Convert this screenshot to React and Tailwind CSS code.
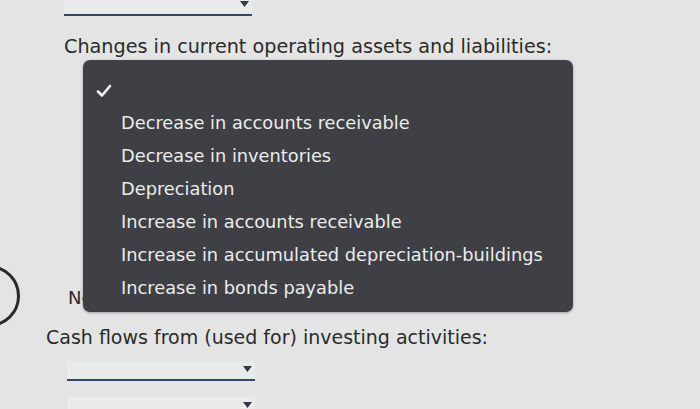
import React from "react";

// Dropdown field with blue underline and small caret
const Field = ({ className = "" }) => (
  <div className={`relative w-[188px] h-[20px] border-b-2 border-[#2f4a66] bg-[#e9ebeb] ${className}`}>
    <svg className="absolute right-[3px] top-[5px]" width="9" height="6" viewBox="0 0 9 6">
      <path d="M0 0 L9 0 L4.5 6 Z" fill="#2f3a46" />
    </svg>
  </div>
);

const options = [
  "Decrease in accounts receivable",
  "Decrease in inventories",
  "Depreciation",
  "Increase in accounts receivable",
  "Increase in accumulated depreciation-buildings",
  "Increase in bonds payable",
];

export default function App() {
  return (
    <div
      className="relative w-[700px] h-[409px] overflow-hidden bg-[#e3e4e3] text-[#2a2b2d]"
      style={{ fontFamily: "'DejaVu Sans', Verdana, sans-serif" }}
    >
      {/* left edge ring */}
      <div className="absolute left-[-42px] top-[265px] w-[62px] h-[62px] rounded-full border-[3px] border-[#2a2a2a]" />

      <div className="flex flex-col">
        <Field className="ml-[64px] mt-[-4px]" />
        <div className="ml-[64px] mt-[19px] text-[19.2px] leading-[24px]">
          Changes in current operating assets and liabilities:
        </div>
        <div className="ml-[68px] mt-[227px] text-[18px] leading-[24px]">Net</div>
        <div className="ml-[46px] mt-[15px] text-[19px] leading-[24px]">
          Cash flows from (used for) investing activities:
        </div>
        <Field className="ml-[67px] mt-[12px]" />
        <Field className="ml-[67px] mt-[16px]" />
      </div>

      {/* open select menu */}
      <div className="absolute left-[83px] top-[60px] w-[490px] h-[252px] rounded-[7px] bg-[#3e4045] shadow-[0_1px_3px_rgba(0,0,0,0.3)] text-[#ececec]">
        <svg className="absolute left-[13px] top-[24px]" width="16" height="14" viewBox="0 0 16 14">
          <path d="M2 7.5 L6 11.5 L14 2" fill="none" stroke="#f2f2f2" strokeWidth="2.6" strokeLinecap="round" strokeLinejoin="round" />
        </svg>
        <div className="flex flex-col pl-[38px] pt-[46px] text-[17.8px] leading-[33px]">
          {options.map((o) => (
            <div key={o}>{o}</div>
          ))}
        </div>
      </div>
    </div>
  );
}
